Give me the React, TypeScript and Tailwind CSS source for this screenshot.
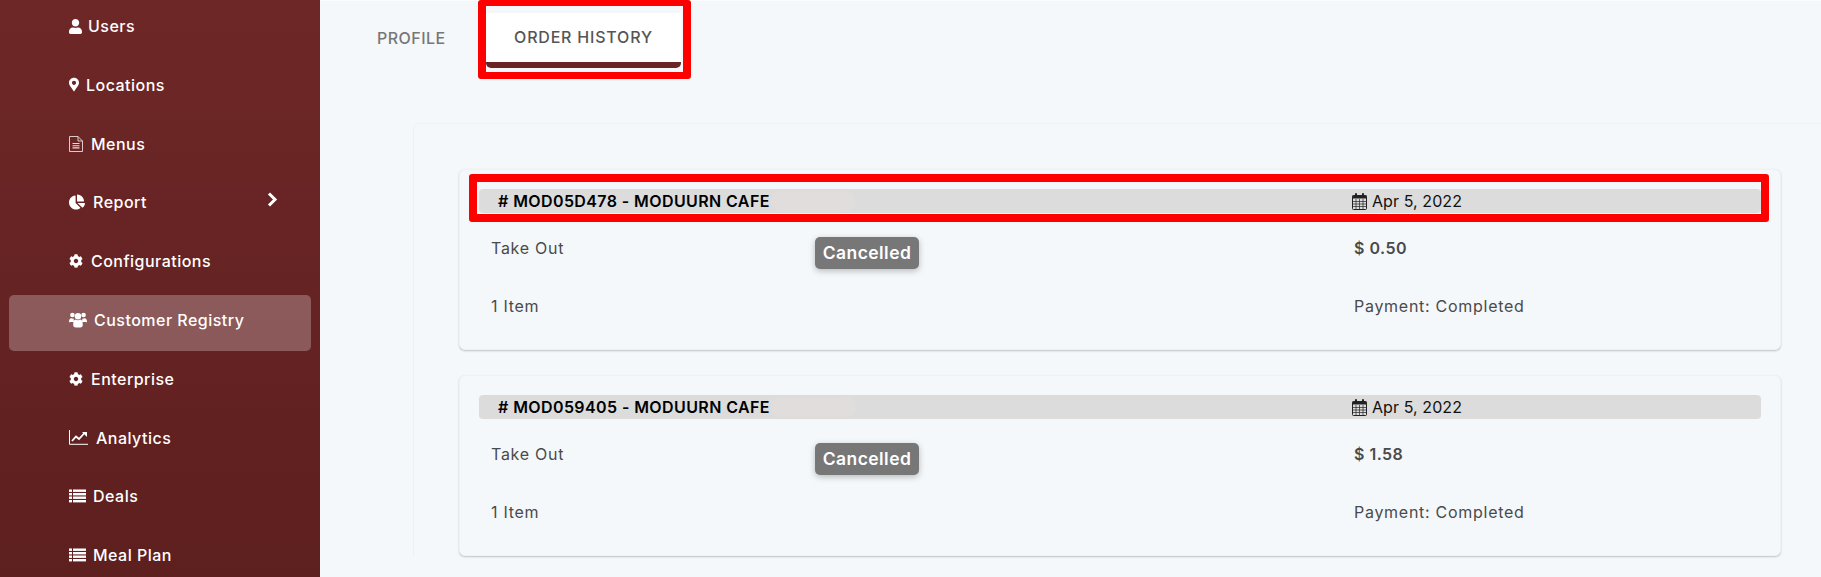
import { FaUser, FaMapMarkerAlt, FaChartPie, FaCog } from 'react-icons/fa'

const font = { fontFamily: 'Inter, "Liberation Sans", sans-serif' }

function ListIcon() {
  return (
    <svg width="17" height="14" viewBox="0 0 17 14" fill="white" className="shrink-0">
      <rect x="0" y="0.5" width="3" height="2.4" />
      <rect x="4" y="0.5" width="13" height="2.4" />
      <rect x="0" y="4" width="3" height="2.4" />
      <rect x="4" y="4" width="13" height="2.4" />
      <rect x="0" y="7.5" width="3" height="2.4" />
      <rect x="4" y="7.5" width="13" height="2.4" />
      <rect x="0" y="11" width="3" height="2.4" />
      <rect x="4" y="11" width="13" height="2.4" />
    </svg>
  )
}

function FileIcon() {
  return (
    <svg width="14" height="16" viewBox="0 0 14 16" className="shrink-0" fill="none" stroke="#e9dcdc" strokeWidth="0.9">
      <path d="M0.5 0.5H9L13.5 5V15.5H0.5Z" />
      <path d="M9 0.5V5H13.5" />
      <path d="M3.5 7.5H10.5M3.5 9.7H10.5M3.5 11.9H10.5" strokeWidth="1.1" />
    </svg>
  )
}

function UsersIcon() {
  return (
    <svg width="18" height="16" viewBox="0 0 18 16" fill="white" className="shrink-0">
      <circle cx="3.4" cy="3" r="2.3" />
      <circle cx="14.6" cy="3" r="2.3" />
      <circle cx="9" cy="4.2" r="3.2" />
      <path d="M0 10.2C0 7.5 1 6 2.6 6.2C3.2 6.6 4 6.8 4.6 6.6C4.6 8 4.8 9 5.3 9.9H1.4C0.6 10 0 10.4 0 10.2Z" />
      <path d="M18 10.2C18 7.5 17 6 15.4 6.2C14.8 6.6 14 6.8 13.4 6.6C13.4 8 13.2 9 12.7 9.9H16.6C17.4 10 18 10.4 18 10.2Z" />
      <path d="M4.2 12.8C4.2 9.8 5 7.6 6.4 7.4C7.8 8.4 10.2 8.4 11.6 7.4C13 7.6 13.8 9.8 13.8 12.8C13.8 14.6 12.8 15.6 11.2 15.6H6.8C5.2 15.6 4.2 14.6 4.2 12.8Z" />
    </svg>
  )
}

function LineChartIcon() {
  return (
    <svg width="19" height="15" viewBox="0 0 19 15" fill="none" stroke="white" className="shrink-0">
      <path d="M0.5 0V14.3H19" strokeWidth="1" />
      <path d="M3 11L7 6.5L10 9L15.5 3" strokeWidth="1.8" />
      <path d="M13 2H18V7Z" fill="white" stroke="none" />
    </svg>
  )
}

function ChevronIcon() {
  return (
    <svg width="11" height="15" viewBox="0 0 11 15" fill="none" stroke="white" strokeWidth="3" className="ml-auto mr-[33px] mb-[6px] shrink-0">
      <path d="M2 1.5L8 7.5L2 13.5" />
    </svg>
  )
}

function CalendarIcon() {
  return (
    <svg width="15" height="17" viewBox="0 0 15 17" className="shrink-0">
      <rect x="0.5" y="2.5" width="14" height="14" rx="1" fill="none" stroke="#222" />
      <rect x="0.5" y="2.5" width="14" height="3" fill="#222" />
      <rect x="3" y="0" width="2" height="4" rx="1" fill="#222" />
      <rect x="10" y="0" width="2" height="4" rx="1" fill="#222" />
      <path d="M4 6v10M7.5 6v10M11 6v10M1 8.5h13M1 11h13M1 13.5h13" stroke="#222" strokeWidth="0.7" fill="none" />
    </svg>
  )
}

const navItems = [
  { label: 'Users', icon: <FaUser className="w-[13px] h-[15px] shrink-0" />, gap: 'gap-[6px]' },
  { label: 'Locations', icon: <FaMapMarkerAlt className="w-[10px] h-[15px] shrink-0" />, gap: 'gap-[7px]' },
  { label: 'Menus', icon: <FileIcon />, gap: 'gap-[8px]' },
  { label: 'Report', icon: <FaChartPie className="w-4 h-4 shrink-0" />, gap: 'gap-[8px]', arrow: true },
  { label: 'Configurations', icon: <FaCog className="w-[14px] h-[14px] shrink-0" />, gap: 'gap-[8px]' },
  { label: 'Customer Registry', icon: <UsersIcon />, gap: 'gap-[7px]', active: true },
  { label: 'Enterprise', icon: <FaCog className="w-[14px] h-[14px] shrink-0" />, gap: 'gap-[8px]' },
  { label: 'Analytics', icon: <LineChartIcon />, gap: 'gap-[8px]' },
  { label: 'Deals', icon: <ListIcon />, gap: 'gap-[7px]' },
  { label: 'Meal Plan', icon: <ListIcon />, gap: 'gap-[7px]' },
]

function OrderCard({ id, amount, marked }: { id: string; amount: string; marked?: boolean }) {
  return (
    <div className="h-[181px] border border-[#eff2f4] rounded-md bg-[#f5f8fb] px-[19px] pt-[19px] shadow-[0_1px_2px_rgba(0,0,0,0.22)]">
      <div className="relative flex items-center h-6 rounded bg-[#dcdcdc] leading-6">
        <div className="w-[873px] pl-[19px] text-[16px] font-semibold text-black tracking-[0.025em]">{id}</div>
        <div className="flex items-center gap-[5px] text-[#111] text-[16px]">
          <CalendarIcon />
          <span className="tracking-[0.005em]">Apr 5, 2022</span>
        </div>
        <div className="absolute left-[291px] top-[1px] w-[86px] h-[22px] rounded-full bg-[#e0dddc] blur-[1px]" />
        {marked && <div className="absolute -left-[10px] -right-[8px] -top-[15px] -bottom-[9px] border-[8px] border-[#ff0000] rounded-[3px]" />}
      </div>
      <div className="grid grid-cols-[324px_539px_1fr] pl-3 text-[#4a4a4a] text-[16px] leading-[22px] tracking-[0.045em]">
        <div className="pt-[23.5px]">Take Out</div>
        <div className="pt-6">
          <span className="flex items-center justify-center w-[104px] h-8 rounded-[5px] bg-[#777777] text-white text-[17.5px] font-semibold tracking-[0.025em] shadow-[0_2px_6px_rgba(0,0,0,0.25)]">
            Cancelled
          </span>
        </div>
        <div className="pt-[23.5px] font-semibold text-[16px] tracking-[0.03em]">{amount}</div>
        <div className="mt-[25.5px]">1 Item</div>
        <div />
        <div className="mt-[25.5px]">Payment: Completed</div>
      </div>
    </div>
  )
}

export default function App() {
  return (
    <div className="flex h-[577px] overflow-hidden bg-[#f5f8fb]" style={font}>
      <aside className="w-[320px] shrink-0 pt-px bg-gradient-to-b from-[#6e2727] to-[#5e1f1f] text-white">
        {navItems.map((item) => (
          <div
            key={item.label}
            className={`flex items-center h-14 mx-[9px] mb-[2.8px] pl-[60px] pb-[6px] rounded-[5px] text-[16px] font-medium tracking-[0.03em] ${item.gap} ${item.active ? 'bg-white/25' : ''}`}
          >
            {item.icon}
            <span>{item.label}</span>
            {item.arrow && <ChevronIcon />}
          </div>
        ))}
      </aside>

      <main className="flex-1 min-w-0 border-t border-[#fbfcfd]">
        <div className="flex items-start pt-3 pl-[57px]">
          <div className="w-[68px] h-[55px] flex items-center pb-[6px] text-[16px] font-medium text-[#777] tracking-[0.03em]">PROFILE</div>
          <div className="relative ml-[41px] w-[195px] h-[55px] flex items-center justify-center pb-[2px] bg-white border-b-[6px] border-[#6b2424] rounded-b-[5px] text-[16px] font-medium text-[#555] tracking-[0.05em]">
            ORDER HISTORY
            <div className="absolute -left-2 -right-[10px] -top-[13px] -bottom-[17px] border-x-[8px] border-b-[7px] border-t-[6px] border-[#ff0000] rounded-[3px]" />
          </div>
        </div>
        <div className="mt-[55px] ml-[93px] pl-[45px] pr-10 pt-[45px] border-l border-t border-[#eef1f4] rounded-tl-md">
          <div className="flex flex-col gap-[25px]">
            <OrderCard id="# MOD05D478 - MODUURN CAFE" amount="$ 0.50" marked />
            <OrderCard id="# MOD059405 - MODUURN CAFE" amount="$ 1.58" />
          </div>
        </div>
      </main>
    </div>
  )
}
